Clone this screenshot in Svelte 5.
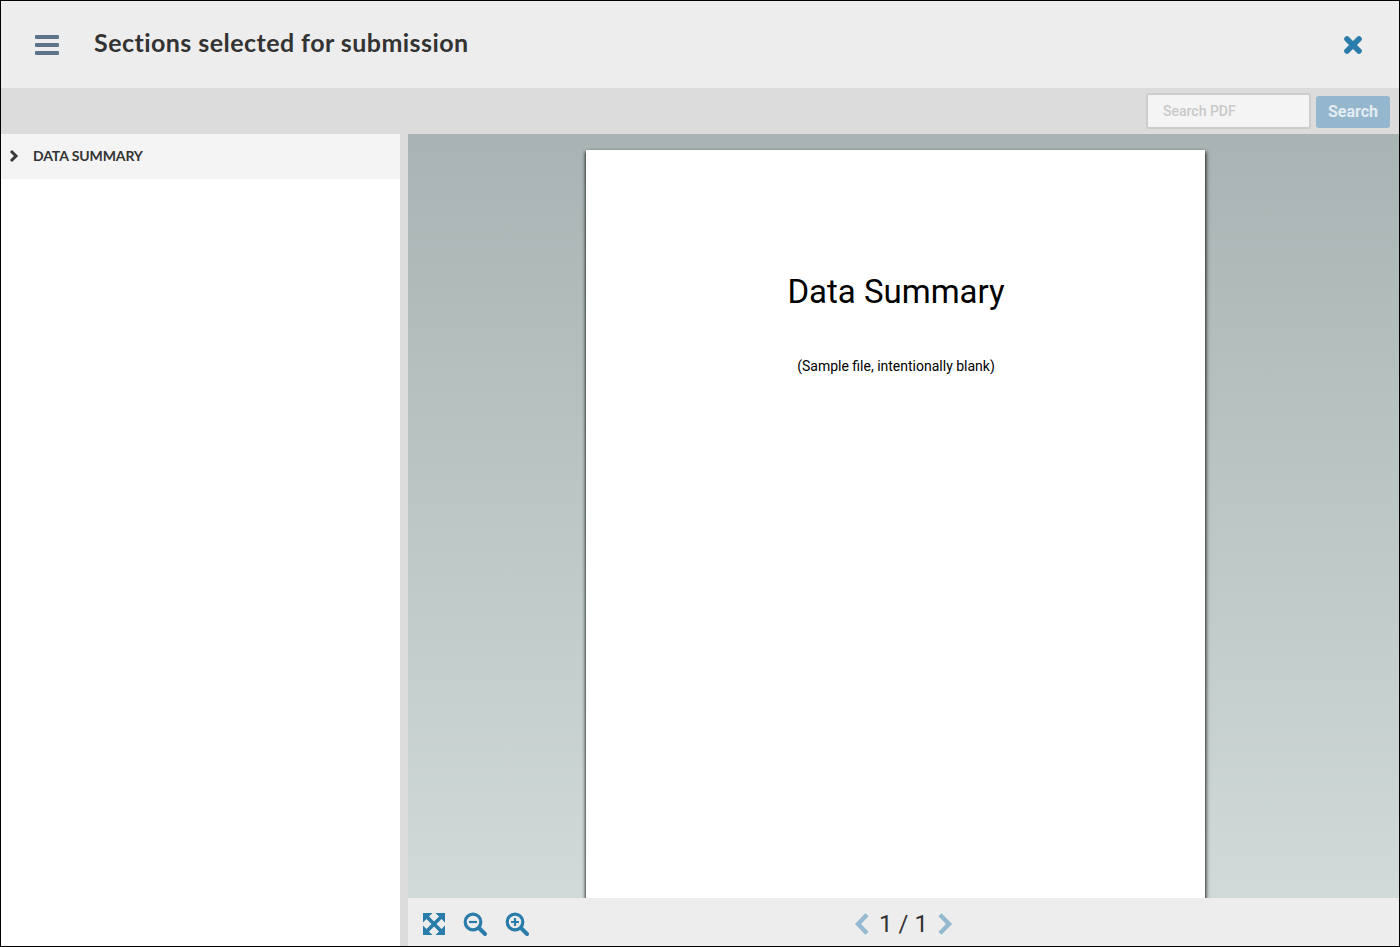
<script lang="ts">
  let query = '';
  const sections = ['Data Summary'];
</script>

<div class="modal">
  <header class="top">
    <button class="menu" aria-label="Menu">
      <span></span><span></span><span></span>
    </button>
    <h1>Sections selected for submission</h1>
    <button class="close" aria-label="Close">
      <svg width="20" height="20" viewBox="0 0 20 20">
        <path d="M4 4 L16 16 M16 4 L4 16" stroke="#2a7cab" stroke-width="5.6" stroke-linecap="round" />
      </svg>
    </button>
  </header>

  <div class="toolbar">
    <input placeholder="Search PDF" bind:value={query} />
    <button class="search" disabled>Search</button>
  </div>

  <div class="main">
    <aside class="sidebar">
      {#each sections as s}
        <div class="row">
          <svg width="12" height="14" viewBox="0 0 12 14">
            <path d="M3 2 L8 7 L3 12" fill="none" stroke="#3a3a3a" stroke-width="3" />
          </svg>
          <span>{s}</span>
        </div>
      {/each}
    </aside>

    <section class="viewer">
      <div class="pages">
        <div class="page">
          <h2>Data Summary</h2>
          <p>(Sample file, intentionally blank)</p>
        </div>
      </div>
      <footer class="controls">
        <div class="zoom">
          <button class="fit" aria-label="Fit">
            <svg width="24" height="24" viewBox="0 0 24 24" fill="#2a7cab">
              <path d="M1 1h9.500L1 10.500z M23 1v9.500L13.500 1z M1 23v-9.500L10.500 23z M23 23h-9.500L23 13.500z" />
              <path d="M5 5 L19 19 M19 5 L5 19" stroke="#2a7cab" stroke-width="3.600" />
            </svg>
          </button>
          <button aria-label="Zoom out">
            <svg width="24" height="24" viewBox="0 0 24 24" fill="none" stroke="#2a7cab">
              <circle cx="10" cy="10" r="7.800" stroke-width="3.200" />
              <path d="M16 16 L22 22" stroke-width="4" stroke-linecap="round" />
              <path d="M6 10 H14" stroke-width="2.200" />
            </svg>
          </button>
          <button aria-label="Zoom in">
            <svg width="24" height="24" viewBox="0 0 24 24" fill="none" stroke="#2a7cab">
              <circle cx="10" cy="10" r="7.800" stroke-width="3.200" />
              <path d="M16 16 L22 22" stroke-width="4" stroke-linecap="round" />
              <path d="M6 10 H14 M10 6 V14" stroke-width="2.200" />
            </svg>
          </button>
        </div>
        <div class="pager">
          <svg width="16" height="24" viewBox="0 0 16 24">
            <path d="M13 2.800 L4 12 L13 21.200" fill="none" stroke="#94b9d0" stroke-width="4.400" />
          </svg>
          <span>1 / 1</span>
          <svg width="16" height="24" viewBox="0 0 16 24">
            <path d="M3 2.800 L12 12 L3 21.200" fill="none" stroke="#94b9d0" stroke-width="4.400" />
          </svg>
        </div>
      </footer>
    </section>
  </div>
</div>

<style>
  :global(body) {
    margin: 0;
  }

  .modal {
    box-sizing: border-box;
    display: flex;
    flex-direction: column;
    width: 1400px;
    height: 947px;
    border: 1px solid #000;
    background: #fff;
    font-family: Lato, sans-serif;
    overflow: hidden;
  }

  button {
    border: none;
    background: none;
    padding: 0;
    display: flex;
  }

  /* Header */
  .top {
    height: 87px;
    flex: none;
    display: flex;
    align-items: center;
    padding: 0 36px 0 34px;
    background: #ededed;
  }

  .menu {
    flex-direction: column;
    gap: 4px;
    width: 24px;
    margin-right: 35px;
  }

  .menu span {
    height: 4px;
    border-radius: 1px;
    background: #5d7389;
  }

  h1 {
    flex: 1;
    margin: 0 0 5px;
    font-size: 25px;
    font-weight: 700;
    color: #333;
    letter-spacing: 0.45px;
  }

  /* Toolbar */
  .toolbar {
    height: 46px;
    flex: none;
    display: flex;
    align-items: center;
    justify-content: flex-end;
    gap: 5px;
    padding-right: 9px;
    background: #dcdcdc;
  }

  input {
    box-sizing: border-box;
    width: 165px;
    height: 36px;
    padding: 0 15px;
    border: 2px solid #cdcdcd;
    border-radius: 3px;
    background: #f4f4f4;
    font: 500 14px Roboto, sans-serif;
  }

  input::placeholder {
    color: #c9c9c9;
  }

  .search {
    box-sizing: border-box;
    width: 74px;
    height: 32px;
    margin-top: 2px;
    padding-bottom: 2px;
    align-items: center;
    justify-content: center;
    border-radius: 3px;
    background: #94b7cd;
    color: #e4edf2;
    font: 700 16px Roboto, sans-serif;
  }

  /* Main area */
  .main {
    flex: 1;
    min-height: 0;
    display: flex;
  }

  .sidebar {
    width: 399px;
    flex: none;
    border-right: 8px solid #dcdcdc;
    background: #fff;
  }

  .row {
    box-sizing: border-box;
    height: 45px;
    display: flex;
    align-items: center;
    gap: 13px;
    padding: 0 0 2px 7px;
    background: #f4f4f4;
    color: #333;
    font-size: 14px;
    font-weight: 700;
    letter-spacing: -0.1px;
    text-transform: uppercase;
  }

  .viewer {
    flex: 1;
    min-width: 0;
    display: flex;
    flex-direction: column;
  }

  .pages {
    flex: 1;
    min-height: 0;
    display: flex;
    justify-content: center;
    padding-top: 16px;
    padding-right: 17px;
    overflow: hidden;
    background: linear-gradient(#a9b3b3, #d1dad9);
  }

  .page {
    box-sizing: border-box;
    width: 619px;
    height: 876px;
    flex: none;
    padding-left: 2px;
    text-align: center;
    background: #fff;
    box-shadow: 1px 2px 4px rgba(0, 0, 0, 0.8), -1px 2px 3px rgba(0, 0, 0, 0.5);
    font-family: Roboto, sans-serif;
    color: #000;
  }

  h2 {
    margin: 122px 0 0;
    font-size: 33px;
    font-weight: 400;
    line-height: 40px;
  }

  p {
    margin: 46px 0 0;
    font-size: 14px;
    line-height: 16px;
  }

  /* Footer controls */
  .controls {
    position: relative;
    box-sizing: border-box;
    height: 48px;
    flex: none;
    display: flex;
    align-items: center;
    justify-content: center;
    padding-top: 4px;
    background: #ededed;
  }

  .zoom {
    position: absolute;
    left: 14px;
    top: 14px;
    display: flex;
    gap: 18px;
  }

  .fit {
    margin-right: -1px;
  }

  .pager {
    display: flex;
    align-items: center;
    gap: 9px;
    color: #333;
    font: 400 24px Roboto, sans-serif;
  }
</style>
